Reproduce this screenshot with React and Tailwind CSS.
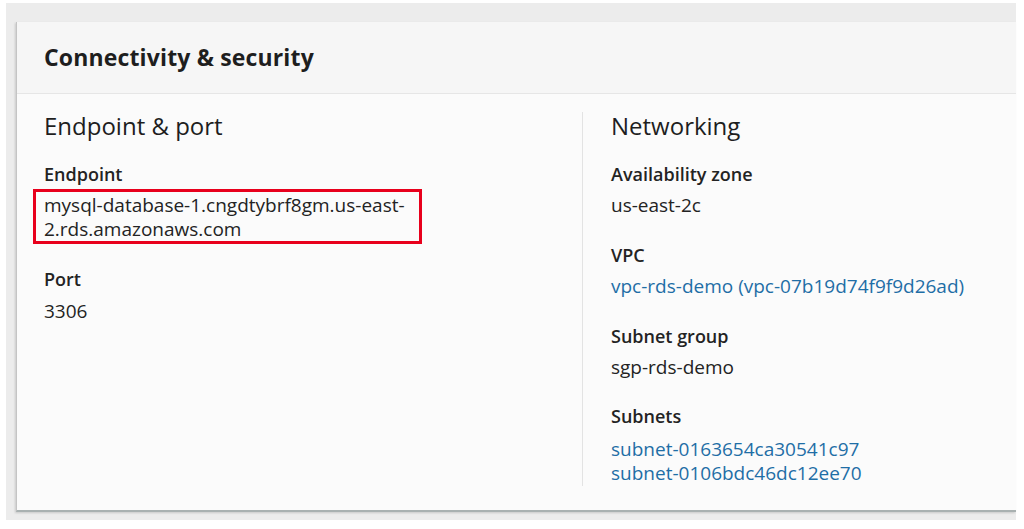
import React from "react";

const font = { fontFamily: '"Open Sans", "Noto Sans", sans-serif' };

function Field({ label, children, className = "", gap = "mt-[7px]" }) {
  return (
    <div className={`flex flex-col ${className}`}>
      <div className="text-[18px] leading-[24px] font-semibold text-[#232323]">
        {label}
      </div>
      <div className={gap}>{children}</div>
    </div>
  );
}

function Value({ children }) {
  return (
    <div className="text-[19px] leading-[24px] font-medium text-[#232323] whitespace-nowrap">
      {children}
    </div>
  );
}

function Link({ children }) {
  return (
    <div className="text-[19px] leading-[24px] font-medium text-[#1f6ea6] whitespace-nowrap">
      {children}
    </div>
  );
}

export default function App() {
  return (
    <div className="w-[1024px] h-[529px] bg-white" style={font}>
      <div className="ml-[6px] mt-[3px] w-[1010px] h-[517px] bg-[#ececec] pl-[10px] pt-[19px]">
        <div className="h-[490px] bg-[#fbfbfb] border-l border-l-[#c4c4c4] border-b-2 border-b-[#a9b1b1] shadow-[-1px_1px_2px_rgba(0,0,0,0.15)] flex flex-col">
          {/* header */}
          <div className="h-[72px] flex items-center px-[27px] bg-[#f6f6f6] border-b border-[#e6e6e6]">
            <h2 className="text-[23px] font-bold text-[#1e1e1e] tracking-[0.15px]">
              Connectivity &amp; security
            </h2>
          </div>

          {/* body */}
          <div className="flex pt-[18px] pl-[27px]">
            {/* left column */}
            <div className="w-[538px] flex flex-col">
              <h3 className="text-[24px] leading-[28px] text-[#1e1e1e]">Endpoint &amp; port</h3>
              <Field label="Endpoint" className="mt-[22px]">
                <div className="-ml-[11px] -mt-[4px] w-[389px] border-[3px] border-[#e8001c] pl-[8px] pt-[1px] pb-0">
                  <Value>
                    mysql-database-1.cngdtybrf8gm.us-east-
                    <br />
                    2.rds.amazonaws.com
                  </Value>
                </div>
              </Field>
              <Field label="Port" className="mt-[23px]" gap="mt-[8px]">
                <Value>3306</Value>
              </Field>
            </div>

            {/* right column */}
            <div className="flex-1 border-l border-[#e3e3e3] pl-[28px] pb-[1px]">
              <h3 className="text-[24px] leading-[28px] text-[#1e1e1e]">Networking</h3>
              <Field label="Availability zone" className="mt-[22px]">
                <Value>us-east-2c</Value>
              </Field>
              <Field label="VPC" className="mt-[26px]">
                <Link>vpc-rds-demo (vpc-07b19d74f9f9d26ad)</Link>
              </Field>
              <Field label="Subnet group" className="mt-[26px]">
                <Value>sgp-rds-demo</Value>
              </Field>
              <Field label="Subnets" className="mt-[25px]" gap="mt-[9px]">
                <Link>subnet-0163654ca30541c97</Link>
                <Link>subnet-0106bdc46dc12ee70</Link>
              </Field>
            </div>
          </div>
        </div>
      </div>
    </div>
  );
}
